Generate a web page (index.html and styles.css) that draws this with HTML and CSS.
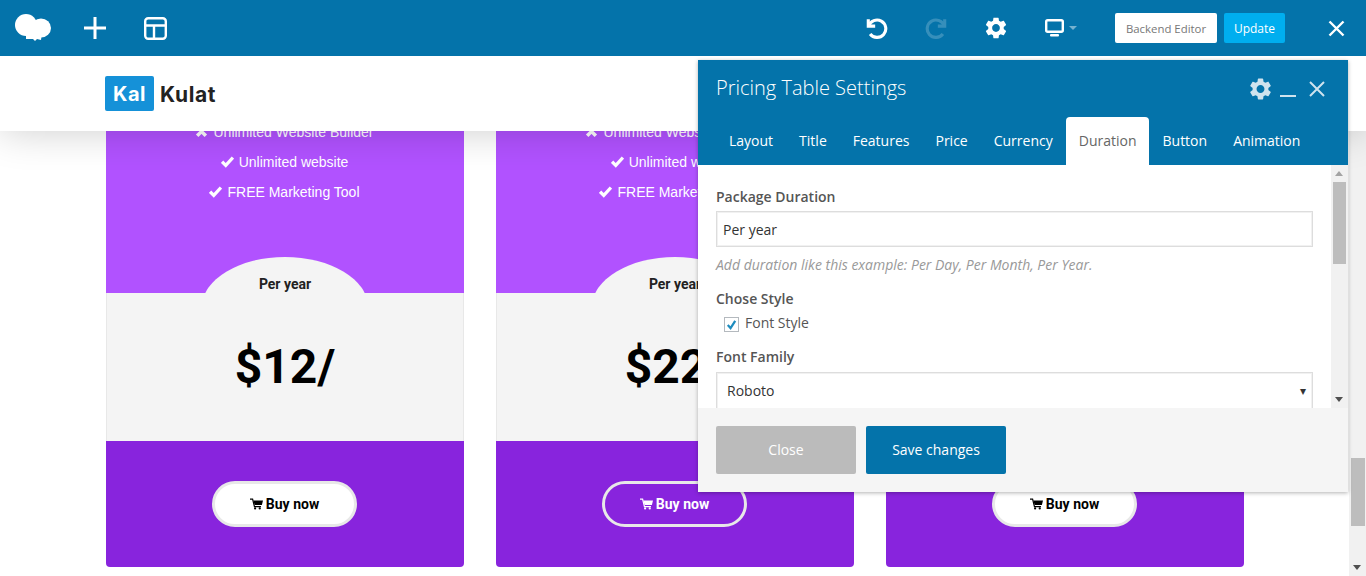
FILE: index.html
```html
<!DOCTYPE html>
<html lang="en">
<head>
    <meta charset="UTF-8">
    <title>Pricing Table Settings</title>
    <link rel="stylesheet" href="styles.css">
</head>
<body>
    <div class="toolbar">
        <svg class="tb-logo" viewBox="0 0 36 28"><circle cx="11" cy="11" r="11" fill="#fff"/><ellipse cx="26" cy="14" rx="10" ry="9.5" fill="#fff"/><path d="M11 19h16l-1 7-4-1-2 2-2-2h-7z" fill="#fff"/></svg>
        <svg class="tb-icon" viewBox="0 0 22 22"><path d="M11 0v22M0 11h22" stroke="#fff" stroke-width="3" stroke-linecap="round"/></svg>
        <svg class="tb-icon layout" viewBox="0 0 23 23" fill="none" stroke="#fff" stroke-width="2.4"><rect x="1.2" y="1.2" width="20.6" height="20.6" rx="3"/><path d="M1.2 8.5h20.6M10 8.5v13.3"/></svg>
        <div class="tb-right">
            <svg class="tb-icon undo" viewBox="0 0 24 24" fill="none" stroke="#fff" stroke-width="3.4"><path d="M2.5 2.5v7.5h7.5"/><path d="M3 10a9.5 9.5 0 1 1 1.5 8.5"/></svg>
            <svg class="tb-icon redo" viewBox="0 0 24 24" fill="none" stroke="#fff" stroke-width="3.4"><path d="M21.5 2.5v7.5h-7.5"/><path d="M21 10a9.5 9.5 0 1 0-1.5 8.5"/></svg>
            <svg class="tb-icon" viewBox="2 1.8 20 20.4"><path fill="#fff" d="M19.14 12.94c.04-.3.06-.61.06-.94 0-.32-.02-.64-.07-.94l2.03-1.58a.49.49 0 0 0 .12-.61l-1.92-3.32a.488.488 0 0 0-.59-.22l-2.39.96c-.5-.38-1.03-.7-1.62-.94l-.36-2.54a.484.484 0 0 0-.48-.41h-3.84c-.24 0-.43.17-.47.41l-.36 2.54c-.59.24-1.13.57-1.62.94l-2.39-.96c-.22-.08-.47 0-.59.22L2.74 8.87c-.12.21-.08.47.12.61l2.03 1.58c-.05.3-.09.63-.09.94s.02.64.07.94l-2.03 1.58a.49.49 0 0 0-.12.61l1.92 3.32c.12.22.37.29.59.22l2.39-.96c.5.38 1.03.7 1.62.94l.36 2.54c.05.24.24.41.48.41h3.84c.24 0 .44-.17.47-.41l.36-2.54c.59-.24 1.13-.56 1.62-.94l2.39.96c.22.08.47 0 .59-.22l1.92-3.32c.12-.22.07-.47-.12-.61l-2.01-1.58zM12 15.6c-1.98 0-3.6-1.62-3.6-3.6s1.62-3.6 3.6-3.6 3.6 1.62 3.6 3.6-1.62 3.6-3.6 3.6z"/></svg>
            <svg class="tb-monitor" viewBox="0 0 32 20"><rect x="1.2" y="2.2" width="16.6" height="11.6" rx="1.5" fill="none" stroke="#fff" stroke-width="2.4"/><rect x="5" y="16" width="9" height="2.4" rx="1" fill="#fff"/><path d="M24 8h8l-4 4z" fill="#fff" opacity=".45"/></svg>
            <a class="tb-btn backend">Backend Editor</a>
            <a class="tb-btn update">Update</a>
            <svg class="tb-close" viewBox="0 0 17 17"><path d="M1.5 1.5l14 14M15.5 1.5l-14 14" stroke="#fff" stroke-width="2.4"/></svg>
        </div>
    </div>

    <header class="site-header">
        <div class="brand-box">Kal</div>
        <div class="brand-name">Kulat</div>
    </header>

    <main class="plans">
        <section class="plan">
            <div class="plan-top">
                <ul class="features">
                    <li><svg class="mark" viewBox="0 0 12 12"><path d="M2 2l8 8M10 2l-8 8" stroke="#fff" stroke-width="3.2"/></svg>Unlimited Website Builder</li>
                    <li><svg class="mark" viewBox="0 0 12 12"><path d="M1 6.2l3.4 3.4 6.6-7.2" fill="none" stroke="#fff" stroke-width="3"/></svg>Unlimited website</li>
                    <li><svg class="mark" viewBox="0 0 12 12"><path d="M1 6.2l3.4 3.4 6.6-7.2" fill="none" stroke="#fff" stroke-width="3"/></svg>FREE Marketing Tool</li>
                </ul>
                <div class="dome">Per year</div>
            </div>
            <div class="plan-price">$12/</div>
            <div class="plan-bottom">
                <a class="buy"><svg class="cart" viewBox="0 0 14 12"><path d="M0 .8h2.8l2 8h7" fill="none" stroke="currentColor" stroke-width="1.3"/><path d="M3.6 2.2H14l-1.2 5H5z" fill="currentColor"/><circle cx="5.5" cy="10.8" r="1.2" fill="currentColor"/><circle cx="10.5" cy="10.8" r="1.2" fill="currentColor"/></svg>Buy now</a>
            </div>
        </section>
        <section class="plan">
            <div class="plan-top">
                <ul class="features">
                    <li><svg class="mark" viewBox="0 0 12 12"><path d="M2 2l8 8M10 2l-8 8" stroke="#fff" stroke-width="3.2"/></svg>Unlimited Website Builder</li>
                    <li><svg class="mark" viewBox="0 0 12 12"><path d="M1 6.2l3.4 3.4 6.6-7.2" fill="none" stroke="#fff" stroke-width="3"/></svg>Unlimited website</li>
                    <li><svg class="mark" viewBox="0 0 12 12"><path d="M1 6.2l3.4 3.4 6.6-7.2" fill="none" stroke="#fff" stroke-width="3"/></svg>FREE Marketing Tool</li>
                </ul>
                <div class="dome">Per year</div>
            </div>
            <div class="plan-price">$22/</div>
            <div class="plan-bottom">
                <a class="buy outline"><svg class="cart" viewBox="0 0 14 12"><path d="M0 .8h2.8l2 8h7" fill="none" stroke="currentColor" stroke-width="1.3"/><path d="M3.6 2.2H14l-1.2 5H5z" fill="currentColor"/><circle cx="5.5" cy="10.8" r="1.2" fill="currentColor"/><circle cx="10.5" cy="10.8" r="1.2" fill="currentColor"/></svg>Buy now</a>
            </div>
        </section>
        <section class="plan">
            <div class="plan-top">
                <ul class="features">
                    <li><svg class="mark" viewBox="0 0 12 12"><path d="M2 2l8 8M10 2l-8 8" stroke="#fff" stroke-width="3.2"/></svg>Unlimited Website Builder</li>
                    <li><svg class="mark" viewBox="0 0 12 12"><path d="M1 6.2l3.4 3.4 6.6-7.2" fill="none" stroke="#fff" stroke-width="3"/></svg>Unlimited website</li>
                    <li><svg class="mark" viewBox="0 0 12 12"><path d="M1 6.2l3.4 3.4 6.6-7.2" fill="none" stroke="#fff" stroke-width="3"/></svg>FREE Marketing Tool</li>
                </ul>
                <div class="dome">Per year</div>
            </div>
            <div class="plan-price">$32/</div>
            <div class="plan-bottom">
                <a class="buy"><svg class="cart" viewBox="0 0 14 12"><path d="M0 .8h2.8l2 8h7" fill="none" stroke="currentColor" stroke-width="1.3"/><path d="M3.6 2.2H14l-1.2 5H5z" fill="currentColor"/><circle cx="5.5" cy="10.8" r="1.2" fill="currentColor"/><circle cx="10.5" cy="10.8" r="1.2" fill="currentColor"/></svg>Buy now</a>
            </div>
        </section>
    </main>

    <div class="page-scroll">
        <div class="arrow-up"></div>
        <div class="page-thumb"></div>
        <div class="arrow-down"></div>
    </div>

    <div class="modal">
        <div class="modal-head">
            <div class="modal-title">
                <h2>Pricing Table Settings</h2>
                <div class="modal-tools">
                    <svg class="mt-gear" viewBox="2.5 2 19 20"><path fill="#cfe3ee" d="M19.14 12.94c.04-.3.06-.61.06-.94 0-.32-.02-.64-.07-.94l2.03-1.58a.49.49 0 0 0 .12-.61l-1.92-3.32a.488.488 0 0 0-.59-.22l-2.39.96c-.5-.38-1.03-.7-1.62-.94l-.36-2.54a.484.484 0 0 0-.48-.41h-3.84c-.24 0-.43.17-.47.41l-.36 2.54c-.59.24-1.13.57-1.62.94l-2.39-.96c-.22-.08-.47 0-.59.22L2.74 8.87c-.12.21-.08.47.12.61l2.03 1.58c-.05.3-.09.63-.09.94s.02.64.07.94l-2.03 1.58a.49.49 0 0 0-.12.61l1.92 3.32c.12.22.37.29.59.22l2.39-.96c.5.38 1.03.7 1.62.94l.36 2.54c.05.24.24.41.48.41h3.84c.24 0 .44-.17.47-.41l.36-2.54c.59-.24 1.13-.56 1.62-.94l2.39.96c.22.08.47 0 .59-.22l1.92-3.32c.12-.22.07-.47-.12-.61l-2.01-1.58zM12 15.6c-1.98 0-3.6-1.62-3.6-3.6s1.62-3.6 3.6-3.6 3.6 1.62 3.6 3.6-1.62 3.6-3.6 3.6z"/></svg>
                    <div class="mt-min"></div>
                    <svg class="mt-close" viewBox="0 0 16 16"><path d="M1 1l14 14M15 1L1 15" stroke="#cfe3ee" stroke-width="2"/></svg>
                </div>
            </div>
            <nav class="tabs">
                <a>Layout</a>
                <a>Title</a>
                <a>Features</a>
                <a>Price</a>
                <a>Currency</a>
                <a class="active">Duration</a>
                <a>Button</a>
                <a>Animation</a>
            </nav>
        </div>
        <div class="modal-body">
            <form class="form">
                <label class="field-label">Package Duration</label>
                <input class="field-input" type="text" value="Per year">
                <p class="hint">Add duration like this example: Per Day, Per Month, Per Year.</p>
                <label class="field-label gap">Chose Style</label>
                <div class="check-row">
                    <span class="check"><svg viewBox="0 0 14 14"><path d="M3 7.5l3 3.5 5-8" fill="none" stroke="#1e8cbe" stroke-width="2.4"/></svg></span>
                    Font Style
                </div>
                <label class="field-label gap-low">Font Family</label>
                <div class="field-select"><span>Roboto</span><span class="select-arrow">▾</span></div>
            </form>
            <div class="modal-scroll">
                <div class="arrow-up small"></div>
                <div class="modal-thumb"></div>
                <div class="arrow-down small"></div>
            </div>
        </div>
        <div class="modal-foot">
            <a class="foot-btn close">Close</a>
            <a class="foot-btn save">Save changes</a>
        </div>
    </div>
</body>
</html>
```

FILE: styles.css
```css
* {
    box-sizing: border-box;
}
body {
    margin: 0;
    height: 576px;
    overflow: hidden;
    position: relative;
    background: #fff;
    font-family: "Open Sans", sans-serif;
}

/* top bar */
.toolbar {
    height: 56px;
    background: #0473aa;
    display: flex;
    align-items: center;
    padding: 0 21px 0 15px;
    position: relative;
    z-index: 3;
}
.tb-logo {
    width: 36px;
    height: 28px;
    margin-right: 33px;
}
.tb-icon {
    width: 22px;
    height: 22px;
    flex: none;
}
.tb-icon.layout {
    width: 23px;
    height: 23px;
    margin-left: 38px;
}
.tb-icon.undo {
    transform: translateX(1px);
}
.tb-icon.redo {
    opacity: .2;
}
.tb-right {
    margin-left: auto;
    display: flex;
    align-items: center;
    gap: 38px;
}
.tb-monitor {
    width: 32px;
    height: 20px;
}
.tb-btn {
    height: 30px;
    line-height: 31px;
    border-radius: 2px;
    font-size: 12px;
    text-align: center;
}
.tb-btn.backend {
    width: 102px;
    background: #fff;
    color: #777;
    font-size: 11.4px;
}
.tb-btn.update {
    width: 61px;
    background: #00aeef;
    color: #fff;
    margin-left: -31px;
}
.tb-close {
    width: 17px;
    height: 17px;
    margin-left: 5px;
}

/* site header */
.site-header {
    height: 75px;
    background: #fff;
    display: flex;
    align-items: center;
    padding-left: 105px;
    position: relative;
    z-index: 2;
    box-shadow: 0 0 40px rgba(0, 0, 0, .2);
}
.brand-box {
    width: 49px;
    height: 35px;
    background: #1591d8;
    border-radius: 2px;
    color: #fff;
    font: 700 20px/37px Inter, sans-serif;
    letter-spacing: .6px;
    text-align: center;
}
.brand-name {
    margin: 2px 0 0 6px;
    color: #222;
    font: 700 21px Inter, sans-serif;
    letter-spacing: .6px;
}

/* pricing cards */
.plans {
    display: flex;
    gap: 32px;
    padding-left: 106px;
}
.plan {
    width: 358px;
    flex: none;
}
.plan-top {
    height: 162px;
    background: #b152ff;
    overflow: hidden;
    display: flex;
    flex-direction: column;
}
.features {
    list-style: none;
    margin: -14px 0 0;
    padding: 0 1px 0 0;
    color: #fff;
    font: 14px/30px "Liberation Sans", Arial, sans-serif;
    text-align: center;
}
.mark {
    width: 13px;
    height: 13px;
    margin-right: 5px;
    vertical-align: -1px;
}
.dome {
    width: 166px;
    height: 100px;
    margin: auto auto -64px 96px;
    border-radius: 50%;
    background: #f4f4f4;
    color: #222;
    font: 700 14px/54px Roboto, sans-serif;
    text-align: center;
}
.plan-price {
    height: 148px;
    background: #f4f4f4;
    border: solid #e8e8e8;
    border-width: 0 1px;
    color: #000;
    font: 700 48px/148px Roboto, sans-serif;
    text-align: center;
}
.plan-bottom {
    height: 126px;
    background: #8824dd;
    border-radius: 0 0 4px 4px;
    display: flex;
    justify-content: center;
    padding: 40px 1px 0 0;
}
.buy {
    width: 145px;
    height: 46px;
    border: 3px solid #e8e8e8;
    border-radius: 23px;
    background: #fff;
    color: #000;
    font: 700 14px/40px Roboto, sans-serif;
    text-align: center;
}
.buy.outline {
    background: transparent;
    color: #fff;
}
.cart {
    width: 13px;
    height: 12px;
    margin-right: 3px;
    vertical-align: -1px;
}

/* page scrollbar */
.page-scroll {
    position: absolute;
    top: 56px;
    right: 0;
    bottom: 0;
    width: 17px;
    background: #f1f1f1;
}
.page-thumb {
    position: absolute;
    top: 402px;
    left: 2px;
    width: 14px;
    height: 68px;
    background: #bdbdbd;
}
.arrow-up,
.arrow-down {
    position: absolute;
    left: 4px;
    border: 4px solid transparent;
    border-width: 0 4px 5px;
    border-bottom-color: #505050;
}
.arrow-up {
    top: 6px;
}
.arrow-down {
    bottom: 6px;
    border-width: 5px 4px 0;
    border-color: #505050 transparent transparent;
}
.arrow-up.small {
    border-bottom-color: #a3a3a3;
}
.arrow-down.small {
    border-top-color: #505050;
}

/* settings modal */
.modal {
    position: absolute;
    left: 698px;
    top: 60px;
    width: 650px;
    height: 432px;
    background: #fff;
    box-shadow: 0 1px 4px rgba(0, 0, 0, .3);
    z-index: 4;
    display: flex;
    flex-direction: column;
}
.modal-head {
    height: 105px;
    background: #0473aa;
    padding: 0 18px;
    color: #fff;
    flex: none;
}
.modal-title {
    height: 57px;
    display: flex;
    align-items: center;
    justify-content: space-between;
}
.modal-title h2 {
    margin: 0 0 2px;
    font-size: 20px;
    font-weight: 300;
}
.modal-tools {
    display: flex;
    align-items: center;
    margin: 0 5px 0 0;
}
.mt-gear {
    width: 21px;
    height: 22px;
    margin-right: 9px;
}
.mt-min {
    width: 16px;
    height: 2px;
    background: #cfe3ee;
    margin: 14px 13px 0 0;
}
.mt-close {
    width: 16px;
    height: 16px;
}
.tabs {
    display: flex;
}
.tabs a {
    height: 48px;
    line-height: 48px;
    padding: 0 13px;
    font-size: 14px;
    border-radius: 4px 4px 0 0;
}
.tabs a.active {
    background: #fff;
    color: #666;
    padding-right: 12px;
    margin-right: 1px;
}
.modal-body {
    height: 243px;
    display: flex;
    overflow: hidden;
}
.form {
    flex: 1;
    padding: 22px 18px 0;
}
.field-label {
    display: block;
    font-size: 14px;
    font-weight: 600;
    line-height: 20px;
    color: #555;
}
.field-label.gap {
    margin-top: 14px;
}
.field-label.gap-low {
    margin-top: 15px;
}
.field-input {
    display: block;
    width: 100%;
    height: 36px;
    margin-top: 4px;
    padding: 0 6px;
    border: 1px solid #ddd;
    box-shadow: inset 0 0 0 1px #f1f1f1;
    font: 14px "Open Sans", sans-serif;
    color: #333;
}
.hint {
    margin: 8px 0 0;
    font-size: 14px;
    font-style: italic;
    line-height: 20px;
    color: #999;
}
.check-row {
    display: flex;
    align-items: center;
    height: 20px;
    margin-top: 3px;
    padding-left: 8px;
    font-size: 14px;
    color: #555;
}
.check {
    width: 15px;
    height: 15px;
    margin: 5px 6px 0 0;
    border: 1px solid #b4b9be;
    display: flex;
}
.field-select {
    display: flex;
    justify-content: space-between;
    align-items: center;
    height: 38px;
    margin-top: 5px;
    padding: 0 6px 2px 10px;
    border: 1px solid #ddd;
    box-shadow: inset 0 0 0 1px #f1f1f1;
    font-size: 14px;
    color: #333;
}
.select-arrow {
    font-size: 12px;
}
.modal-scroll {
    width: 17px;
    flex: none;
    background: #f1f1f1;
    position: relative;
}
.modal-thumb {
    position: absolute;
    top: 17px;
    left: 2px;
    width: 13px;
    height: 82px;
    background: #bdbdbd;
}
.modal-foot {
    flex: 1;
    background: #f5f5f5;
    padding: 18px;
    display: flex;
    gap: 10px;
}
.foot-btn {
    width: 140px;
    height: 48px;
    line-height: 48px;
    border-radius: 2px;
    color: #fff;
    font-size: 14px;
    text-align: center;
}
.foot-btn.close {
    background: #bbb;
}
.foot-btn.save {
    background: #0473aa;
}
```
